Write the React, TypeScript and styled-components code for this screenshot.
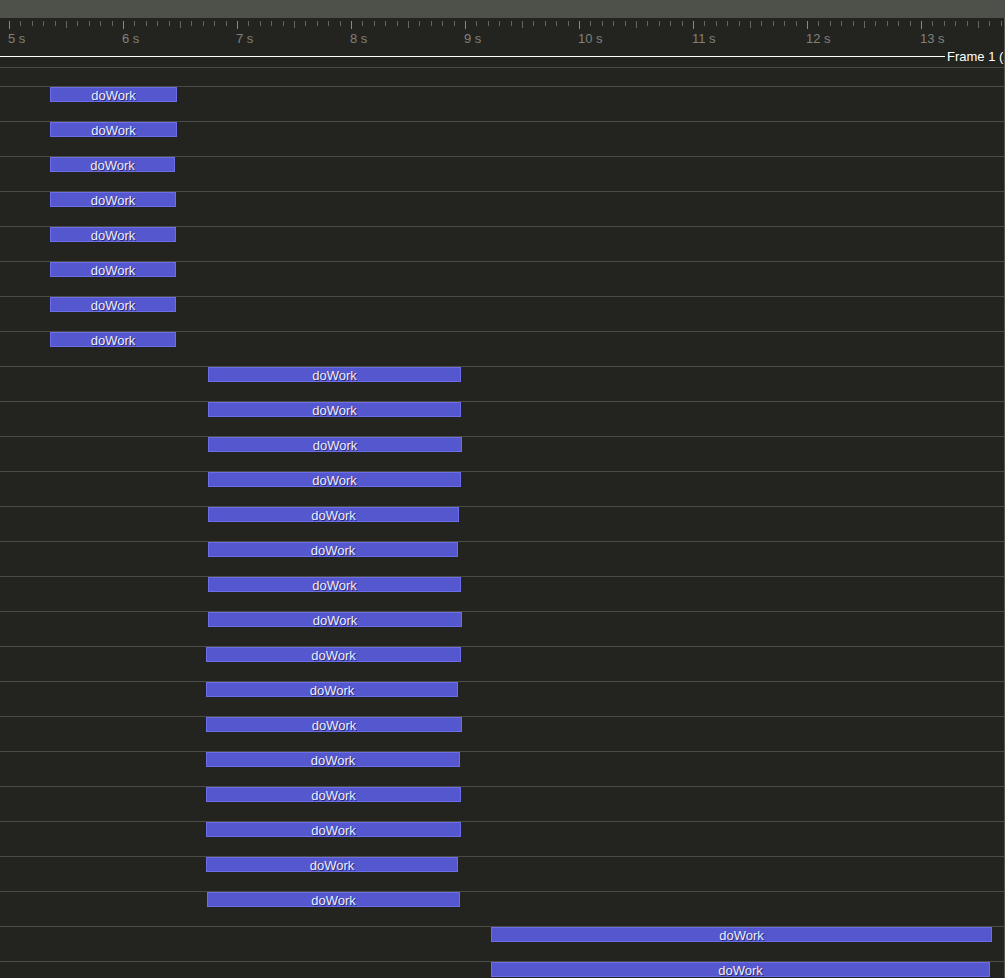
import { createGlobalStyle } from "styled-components";
import styled from "styled-components";

const PX_PER_SEC = 114;
const ORIGIN_X = 9;
const START_SEC = 5;

// bars in pixel space [left, right] per track
const bars: [number, number][] = [
  [50, 177], [50, 177], [50, 175], [50, 176], [50, 176], [50, 176], [50, 176], [50, 176],
  [208, 461], [208, 461], [208, 462], [208, 461], [208, 459], [208, 458], [208, 461], [208, 462],
  [206, 461], [206, 458], [206, 462], [206, 460], [206, 461], [206, 461], [206, 458], [207, 460],
  [491, 992], [491, 990],
];

const GlobalStyle = createGlobalStyle`
  html, body {
    margin: 0;
    padding: 0;
    background: #23241f;
    overflow: hidden;
  }
  body {
    font-family: "Liberation Sans", Arial, sans-serif;
  }
`;

const Page = styled.div`
  width: 1005px;
  height: 978px;
  display: flex;
  flex-direction: column;
  background: #23241f;
  overflow: hidden;
`;

const TopBar = styled.div`
  height: 18px;
  flex: none;
  background: #4e514a;
`;

const Panel = styled.div`
  flex: 1;
  display: flex;
  flex-direction: column;
  border-right: 1px solid #55564f;
  width: 1004px;
`;

const Ruler = styled.div`
  position: relative;
  height: 32px;
  flex: none;
`;

const Tick = styled.div<{ $size: "major" | "half" | "minor" }>`
  position: absolute;
  top: 3px;
  width: 1px;
  height: ${(p) => (p.$size === "major" ? 8 : p.$size === "half" ? 7 : 5)}px;
  background: ${(p) => (p.$size === "major" ? "#8a8a86" : "#65665f")};
`;

const TickLabel = styled.span`
  position: absolute;
  top: 13px;
  font-size: 13px;
  line-height: 15px;
  color: #80817b;
`;

const FrameRow = styled.div`
  height: 17px;
  flex: none;
  display: flex;
  align-items: flex-start;
  white-space: nowrap;
  overflow: hidden;
`;

const FrameLine = styled.div`
  width: 945px;
  flex: none;
  height: 1px;
  margin-top: 6px;
  background: #ffffff;
`;

const FrameLabel = styled.span`
  margin-left: 2px;
  margin-top: -1px;
  font-size: 13px;
  line-height: 15px;
  color: #ffffff;
`;

const HeaderTrack = styled.div`
  height: 18px;
  flex: none;
  border-top: 1px solid #4b4c46;
`;

const Track = styled.div`
  position: relative;
  height: 34px;
  flex: none;
  border-top: 1px solid #4b4c46;
`;

const Bar = styled.div`
  position: absolute;
  top: 0;
  height: 15px;
  box-sizing: border-box;
  background: #5557cf;
  border: 1px solid #6b6ee8;
  display: flex;
  align-items: flex-start;
  justify-content: center;
  font-size: 13px;
  line-height: 15px;
  color: #ececff;
  text-shadow: 1px 1px 0 rgba(0, 0, 0, 0.55);
  white-space: nowrap;
  overflow: hidden;
`;

function buildTicks() {
  const ticks: { x: number; size: "major" | "half" | "minor"; label?: string }[] = [];
  for (let i = 0; ; i++) {
    const x = Math.round(ORIGIN_X + i * (PX_PER_SEC / 10));
    if (x > 1003) break;
    const mod = i % 10;
    if (mod === 0) ticks.push({ x, size: "major", label: `${START_SEC + i / 10} s` });
    else if (mod === 5) ticks.push({ x, size: "half" });
    else ticks.push({ x, size: "minor" });
  }
  return ticks;
}

export default function App() {
  const ticks = buildTicks();
  return (
    <>
      <GlobalStyle />
      <Page>
        <TopBar />
        <Panel>
          <Ruler>
            {ticks.map((t) => (
              <Tick key={t.x} $size={t.size} style={{ left: t.x }} />
            ))}
            {ticks
              .filter((t) => t.label)
              .map((t) => (
                <TickLabel key={"l" + t.x} style={{ left: t.x - 1 }}>
                  {t.label}
                </TickLabel>
              ))}
          </Ruler>
          <FrameRow>
            <FrameLine />
            <FrameLabel>Frame 1 (2)</FrameLabel>
          </FrameRow>
          <HeaderTrack />
          {bars.map(([l, r], i) => (
            <Track key={i}>
              <Bar style={{ left: l, width: r - l }}>doWork</Bar>
            </Track>
          ))}
        </Panel>
      </Page>
    </>
  );
}
